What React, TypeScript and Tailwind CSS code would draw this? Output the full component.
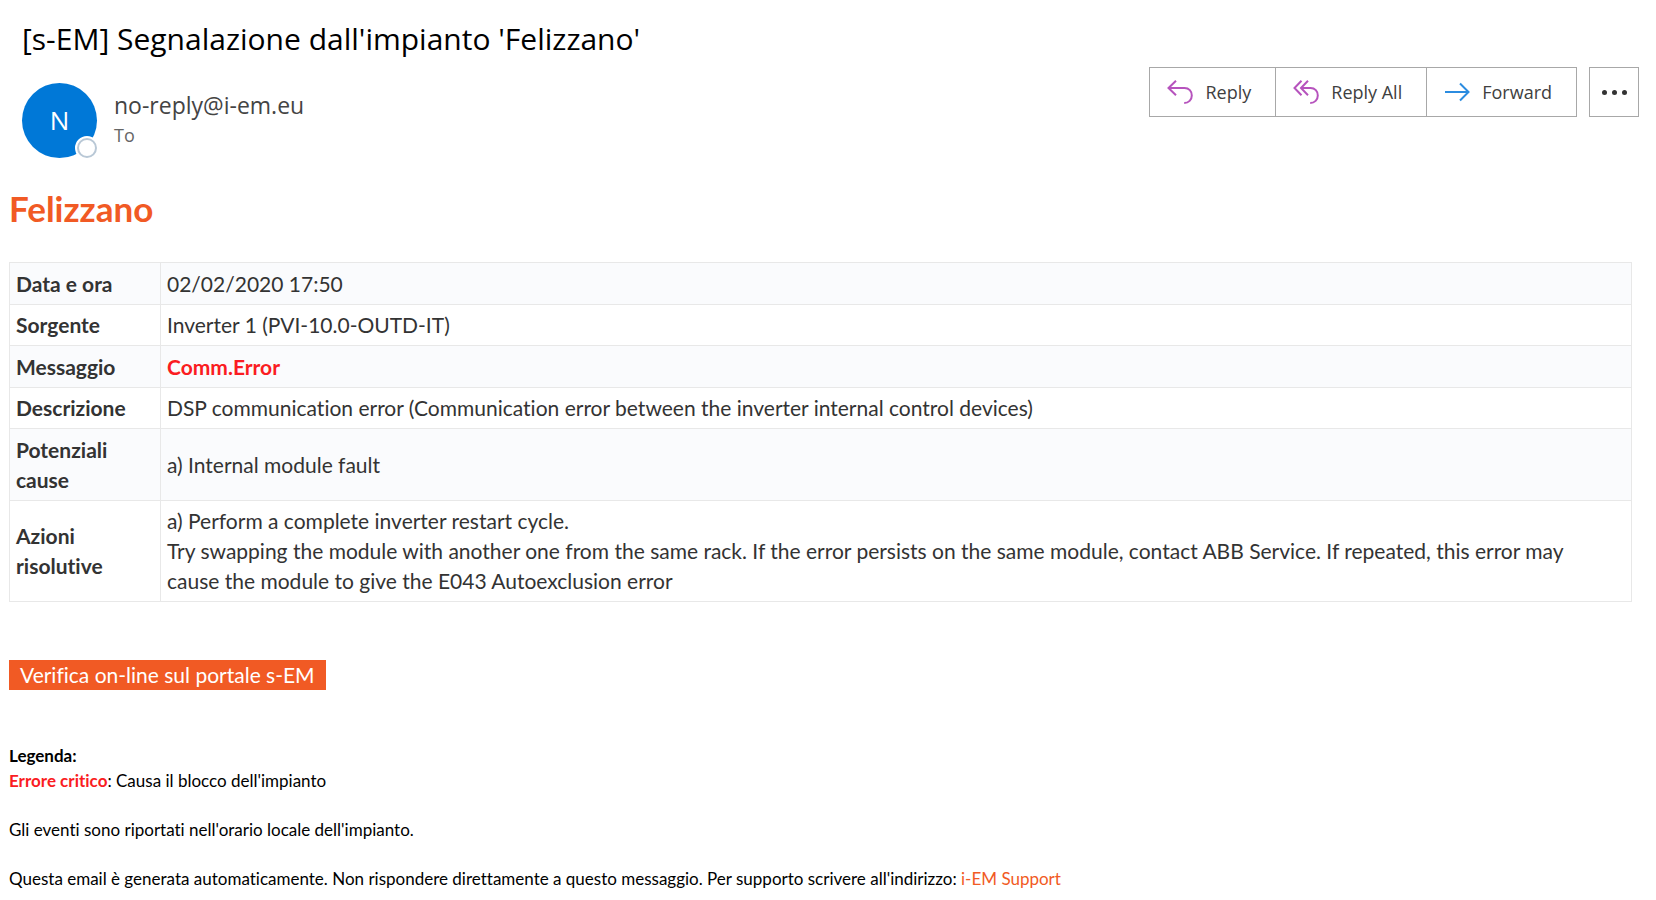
import type { ReactNode } from "react";

type Row = { label: string; value: ReactNode };

const rows: Row[] = [
  { label: "Data e ora", value: "02/02/2020 17:50" },
  { label: "Sorgente", value: "Inverter 1 (PVI-10.0-OUTD-IT)" },
  { label: "Messaggio", value: <strong className="font-bold text-[#fa1c22]">Comm.Error</strong> },
  {
    label: "Descrizione",
    value: "DSP communication error (Communication error between the inverter internal control devices)",
  },
  { label: "Potenziali cause", value: "a) Internal module fault" },
  {
    label: "Azioni risolutive",
    value: (
      <>
        a) Perform a complete inverter restart cycle.
        <br />
        Try swapping the module with another one from the same rack. If the error persists on the same module, contact
        ABB Service. If repeated, this error may cause the module to give the E043 Autoexclusion error
      </>
    ),
  },
];

function ReplyIcon() {
  return (
    <svg className="h-6 w-[26px]" viewBox="0 0 26 24" fill="none" stroke="#b653bd" strokeWidth="2" aria-hidden="true">
      <path d="M9 0.8 L1.5 8 L9 15.2" />
      <path d="M1.5 8 H17.5 C22 8 24.8 11.3 24.8 15.4 C24.8 19.8 21.6 23 17.2 23" />
    </svg>
  );
}

function ReplyAllIcon() {
  return (
    <svg className="h-6 w-[26px]" viewBox="0 0 26 24" fill="none" stroke="#b653bd" strokeWidth="2" aria-hidden="true">
      <path d="M8.5 0.8 L1.5 8 L8.5 15.2" />
      <path d="M15 0.8 L8 8 L15 15.2" />
      <path d="M8 8 H17.5 C22 8 24.8 11.3 24.8 15.4 C24.8 19.8 21.6 23 17.2 23" />
    </svg>
  );
}

function ForwardIcon() {
  return (
    <svg className="h-5 w-[26px]" viewBox="0 0 26 20" fill="none" stroke="#2b8ce0" strokeWidth="2" aria-hidden="true">
      <path d="M1 10 H24" />
      <path d="M16 1.5 L24.5 10 L16 18.5" />
    </svg>
  );
}

function Toolbar() {
  const button = "flex h-full items-center gap-3 pr-6 pl-[17px] hover:bg-gray-50";
  return (
    <div className="flex gap-3 text-[18px] text-[#404040]">
      <div className="flex h-[50px] divide-x divide-[#a8a8a8] border border-[#a8a8a8]">
        <button type="button" className={button}>
          <ReplyIcon />
          Reply
        </button>
        <button type="button" className={button}>
          <ReplyAllIcon />
          Reply All
        </button>
        <button type="button" className={button}>
          <ForwardIcon />
          Forward
        </button>
      </div>
      <button
        type="button"
        aria-label="More actions"
        className="flex size-[50px] items-center justify-center gap-[5px] border border-[#a8a8a8]"
      >
        <span className="size-[5px] rounded-full bg-[#333333]" />
        <span className="size-[5px] rounded-full bg-[#333333]" />
        <span className="size-[5px] rounded-full bg-[#333333]" />
      </button>
    </div>
  );
}

export default function App() {
  return (
    <div className="min-h-screen bg-white font-['Lato','Noto_Sans',sans-serif] text-black [font-variant-ligatures:none]">
      <header className="flex items-start justify-between pt-[18px] pr-[17px] pl-[22px] font-['Open_Sans','Noto_Sans',sans-serif]">
        <div>
          <h1 className="text-[30px] leading-[42px]">[s-EM] Segnalazione dall'impianto 'Felizzano'</h1>
          <div className="mt-[23px] flex gap-[17px]">
            <div className="relative flex size-[75px] items-center justify-center rounded-full bg-[#0078d7] text-[26px] text-white">
              N
              <span className="absolute right-[-2px] bottom-[-2px] size-6 rounded-full border-2 border-white bg-white">
                <span className="block size-5 rounded-full border-2 border-[#b9c8d6]" />
              </span>
            </div>
            <div className="pt-[6px]">
              <p className="text-[23px] leading-[32px] text-[#444444]">no-reply@i-em.eu</p>
              <p className="text-[18px] leading-[28px] text-[#666666]">To</p>
            </div>
          </div>
        </div>
        <div className="pt-[49px]">
          <Toolbar />
        </div>
      </header>

      <main className="px-[9px] pt-[28px]">
        <h2 className="text-[35px] leading-[44px] font-bold text-[#f15a24]">Felizzano</h2>
        <div className="mt-8 pr-[15px]">
          <table className="w-full border-collapse text-[21px] leading-[30px] text-[#333333]">
            <tbody>
              {rows.map((row) => (
                <tr key={row.label} className="group odd:bg-[#fafbfd]">
                  <th
                    scope="row"
                    className="w-[151px] border border-[#e8e8e8] px-[6px] py-[5px] text-left font-bold group-odd:pt-[6px]"
                  >
                    {row.label}
                  </th>
                  <td className="border border-[#e8e8e8] py-[5px] pr-6 pl-[6px] group-odd:pt-[6px]">{row.value}</td>
                </tr>
              ))}
            </tbody>
          </table>
        </div>
        <a
          href="#portale"
          className="mt-[58px] inline-block bg-[#f15a24] px-[11px] text-[21px] leading-[30px] text-white"
        >
          Verifica on-line sul portale s-EM
        </a>
        <div className="mt-[53px] text-[17px] leading-[25px]">
          <p className="font-bold">Legenda:</p>
          <p>
            <strong className="font-bold text-[#fa1c22]">Errore critico</strong>: Causa il blocco dell'impianto
          </p>
          <p className="mt-6">Gli eventi sono riportati nell'orario locale dell'impianto.</p>
          <p className="mt-6">
            Questa email è generata automaticamente. Non rispondere direttamente a questo messaggio. Per supporto
            scrivere all'indirizzo:{" "}
            <a href="#supporto" className="text-[#f15a24]">
              i-EM Support
            </a>
          </p>
        </div>
      </main>
    </div>
  );
}
